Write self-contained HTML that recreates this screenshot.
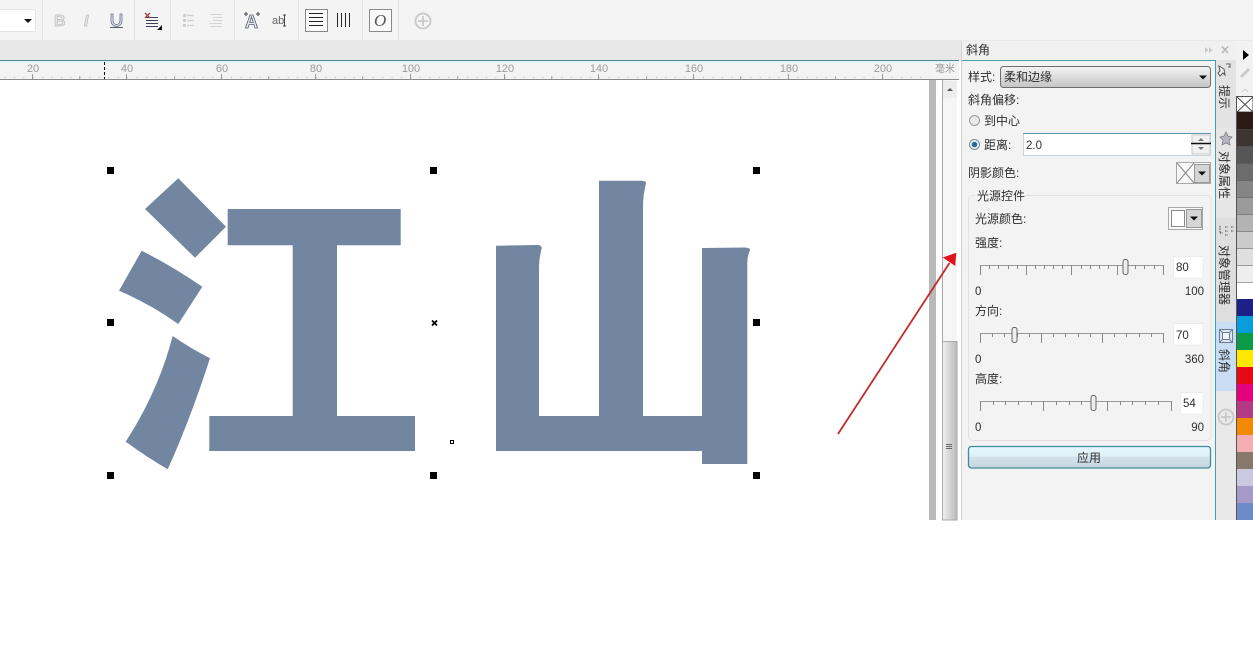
<!DOCTYPE html>
<html><head><meta charset="utf-8"><style>
html,body{margin:0;padding:0;background:#fff;width:1253px;height:671px;overflow:hidden}
svg{display:block}
text{font-family:"Liberation Sans","Noto Sans CJK SC",sans-serif;font-size:12px;fill:#2e2e2e}
.r{font-size:11px;fill:#9a9a9a}
</style></head><body>
<svg width="1253" height="671" viewBox="0 0 1253 671" xmlns="http://www.w3.org/2000/svg">
<defs>
<linearGradient id="sb" x1="0" x2="1" y1="0" y2="0"><stop offset="0" stop-color="#f2f2f2"/><stop offset="1" stop-color="#b9b9b9"/></linearGradient>
<linearGradient id="sel" x1="0" x2="0" y1="0" y2="1"><stop offset="0" stop-color="#f4f4f4"/><stop offset="1" stop-color="#c4c4c4"/></linearGradient>
<linearGradient id="btn" x1="0" x2="0" y1="0" y2="1"><stop offset="0" stop-color="#e6f8fe"/><stop offset=".45" stop-color="#dff1f8"/><stop offset=".5" stop-color="#d3e2ea"/><stop offset="1" stop-color="#c8d6de"/></linearGradient>
</defs>
<rect width="1253" height="671" fill="#fff"/>
<!-- toolbar -->
<rect width="1253" height="40" fill="#f4f4f4"/>
<rect y="40" width="1253" height="20" fill="#e8e8e8"/>
<rect x="-1" y="9.500" width="36.500" height="22" fill="#fff" stroke="#e4e4e4"/>
<path d="M24 19h8l-4 4z" fill="#111"/>
<g stroke="#e2e2e2"><path d="M42.500 0v40M134.500 0v40M170.500 0v40M234.500 0v40M298.500 0v40M362.500 0v40M398.500 0v40"/></g>
<text x="54" y="26" style="font-size:16px;font-weight:bold;fill:#e4e4e4;stroke:#bdbdbd;stroke-width:.7">B</text>
<text x="84" y="26" style="font-size:16px;font-weight:bold;font-style:italic;fill:#e4e4e4;stroke:#bdbdbd;stroke-width:.7">I</text>
<path d="M111 14v7a5 5 0 0 0 11 0v-7h-2v7a3 3 0 0 1-7 0v-7z" fill="#dfe2ec" stroke="#6c7088" stroke-width=".8"/><path d="M110 27.500h13" stroke="#555a70"/>
<path d="M146 17.500h12M146 20.500h12M146 23.500h12M146 26.500h12" stroke="#3c3f5c"/><path d="M145 13l5 5M150 13l-5 5" stroke="#b23a3a" stroke-width="1.300"/><path d="M162 25v5h-5z" fill="#111"/>
<g fill="#cdd0d0"><rect x="183" y="14" width="3" height="3"/><rect x="183" y="19" width="3" height="3"/><rect x="183" y="24" width="3" height="3"/></g>
<path d="M187 15.500h7M187 20.500h7M187 25.500h7" stroke="#d0d2d2" stroke-width="1.500"/>
<path d="M210 14.500h12M213 17.500h9M213 20.500h9M210 23.500h12M210 26.500h12" stroke="#d2d4d4"/>
<text x="245" y="28" style="font-size:18px;font-weight:bold;fill:#e8e8ee;stroke:#5a5f78;stroke-width:.8">A</text>
<path d="M244 14h4M246 12v4M256 14h4M258 12v4" stroke="#444"/>
<text x="272" y="24" style="font-size:11px;fill:#666">ab</text><path d="M284.500 15v11M283 15h3M283 26h3" stroke="#444"/>
<rect x="305.500" y="9.500" width="22" height="22" fill="#fafafa" stroke="#8a8a8a"/>
<path d="M309 13.500h14M309 17.500h14M309 21.500h14M309 25.500h14" stroke="#222"/>
<path d="M337.500 13v14M341.500 13v14M345.500 13v14M349.500 13v14" stroke="#222"/>
<rect x="369.500" y="9.500" width="22" height="22" fill="#fafafa" stroke="#8a8a8a"/>
<text x="374" y="26" style="font-size:17px;font-style:italic;font-family:'Liberation Serif',serif;fill:#555">O</text>
<circle cx="423" cy="21" r="7.500" fill="none" stroke="#c8c8c8" stroke-width="1.800"/><path d="M418 21h10M423 16v10" stroke="#c8c8c8" stroke-width="1.800"/>
<!-- ruler -->
<rect y="60" width="959" height="20" fill="#f3f3f3"/>
<rect y="60" width="959" height="1" fill="#4f8a96"/>
<rect y="61" width="959" height="2" fill="#dff5f8"/>
<rect y="79" width="959" height="1" fill="#8c8c8c"/>
<path d="M0 77.500H930" stroke="#bdbdbd" stroke-dasharray="1 8.440" stroke-dashoffset="-4.500"/>
<path d="M32.500 74v5M126.500 74v5M221.500 74v5M315.500 74v5M410.500 74v5M504.500 74v5M598.500 74v5M693.500 74v5M788.500 74v5M882.500 74v5" stroke="#9a9a9a"/>
<path d="M79.500 76v3M174.500 76v3M268.500 76v3M362.500 76v3M457.500 76v3M551.500 76v3M646.500 76v3M740.500 76v3M835.500 76v3" stroke="#b0b0b0"/>
<text class="r" x="33" y="72" text-anchor="middle">20</text><text class="r" x="127" y="72" text-anchor="middle">40</text><text class="r" x="222" y="72" text-anchor="middle">60</text><text class="r" x="316" y="72" text-anchor="middle">80</text><text class="r" x="411" y="72" text-anchor="middle">100</text><text class="r" x="505" y="72" text-anchor="middle">120</text><text class="r" x="599" y="72" text-anchor="middle">140</text><text class="r" x="694" y="72" text-anchor="middle">160</text><text class="r" x="789" y="72" text-anchor="middle">180</text><text class="r" x="883" y="72" text-anchor="middle">200</text>
<text class="r" x="935" y="72" style="font-size:10px">毫米</text>
<path d="M104.500 62v17" stroke="#111" stroke-dasharray="3 2"/>
<!-- scroll -->
<rect x="929" y="80" width="7" height="440" fill="#b9b9b9"/>
<rect x="942" y="80" width="15" height="440" fill="#f6f6f6"/>
<path d="M942.500 80v440" stroke="#a8a8a8"/>
<rect x="943" y="81" width="14" height="17" fill="#ededed"/>
<path d="M947 91l3-3 3 3z" fill="#555"/>
<rect x="942.500" y="341.500" width="14.500" height="178.500" fill="url(#sb)" stroke="#a9a9a9"/>
<path d="M946 444.500h6M946 446.500h6M946 448.500h6" stroke="#666"/>
<!-- glyphs -->
<g fill="#7286a2">
<path d="M178.300 178.300L226 226.700 195 257.700 145 209z"/>
<path d="M141.700 250.700Q172 266 202.300 286.700L178.300 324Q150 304 119 290.700z"/>
<path d="M172.700 336Q190 348 210 358.300Q190 420 167.700 469.300Q145 456 125.700 441.700Q158 392 172.700 336z"/>
<path d="M227.700 209H400.700V245.300H337V416H415V451H209.300V416H292.700V245.300H227.700z"/>
<path d="M496 245.700L536.700 245Q542 245 541.700 248.300Q539 258 539 270V416H599V180.700H641.700Q646.500 181 646 183.300Q643 195 643 206.700V416H702V248L745 247.500Q750.500 248 750 250Q747.300 256 747.300 263V464H702V451H496z"/>
</g>
<!-- handles -->
<g fill="#000">
<rect x="107" y="167" width="7" height="7"/><rect x="430" y="167" width="7" height="7"/><rect x="753" y="167" width="7" height="7"/>
<rect x="107" y="319" width="7" height="7"/><rect x="753" y="319" width="7" height="7"/>
<rect x="107" y="472" width="7" height="7"/><rect x="430" y="472" width="7" height="7"/><rect x="753" y="472" width="7" height="7"/>
</g>
<path d="M432 320.500l5 5M437 320.500l-5 5" stroke="#000" stroke-width="1.800"/>
<rect x="450.500" y="440.500" width="3" height="3" fill="#fff" stroke="#000"/>
<!-- arrow -->
<path d="M838 434L949.500 263" stroke="#c22a2e" stroke-width="1.800" fill="none"/>
<path d="M956.300 252.700L955.200 266 942.800 257.500z" fill="#e0141c"/>
<!-- panel -->
<rect x="962" y="41" width="291" height="19" fill="#f0f0f0"/>
<rect x="962" y="60" width="254" height="460" fill="#f3f3f3"/>
<path d="M961.500 41v479" stroke="#d2d2d2"/>
<path d="M962 60.500h254M1215.500 60v460" stroke="#46a0ac"/>
<text x="966" y="54">斜角</text>
<path d="M1205 47l3 3-3 3zM1209 47l3 3-3 3z" fill="#c4c4c4"/>
<path d="M1222 46.500l6 6.500M1228 46.500l-6 6.500" stroke="#b5b5b5" stroke-width="1.500"/>
<text x="968" y="81">样式:</text>
<rect x="1000.500" y="66.500" width="210" height="21" rx="3" fill="url(#sel)" stroke="#6d6d6d"/>
<text x="1004" y="81">柔和边缘</text>
<path d="M1199 75.500h8l-4 4z" fill="#111"/>
<text x="968" y="104">斜角偏移:</text>
<circle cx="974.500" cy="120.500" r="5" fill="#e9e9e9" stroke="#9a9a9a"/>
<text x="984" y="125">到中心</text>
<circle cx="974.500" cy="144.500" r="5" fill="#eef3f6" stroke="#7b8a94"/><circle cx="974.500" cy="144.500" r="2.800" fill="#2a6a94"/>
<text x="984" y="149">距离:</text>
<rect x="1023.500" y="133.500" width="187" height="22" fill="#fff" stroke="#c8d4da"/>
<path d="M1023 133.500h188" stroke="#5d97ae"/>
<text x="1026" y="149" style="font-size:11.500px">2.0</text>
<rect x="1192" y="135" width="18" height="19" fill="#f1f1f1" stroke="#c9c9c9"/>
<path d="M1198 141l3-3 3 3zM1198 147l3 3 3-3z" fill="#777"/>
<path d="M1191 143.500h20" stroke="#111" stroke-width="1.500"/>
<text x="968" y="177">阴影颜色:</text>
<rect x="1176.500" y="162.500" width="34" height="21" fill="#f8f8f8" stroke="#a8a8a8"/>
<path d="M1177 163l17 20M1194 163l-17 20" stroke="#888"/>
<rect x="1194.500" y="164.500" width="15" height="18" fill="#d5d5d5" stroke="#999"/>
<path d="M1198 171.500h8l-4 4z" fill="#111"/>
<rect x="968.500" y="195.500" width="242.500" height="245" rx="4" fill="#f3f3f3" stroke="#e2e2e2"/>
<rect x="975" y="189" width="50" height="12" fill="#f3f3f3"/>
<text x="977" y="200">光源控件</text>
<text x="975" y="223">光源颜色:</text>
<rect x="1168.500" y="207.500" width="34" height="22" fill="#f8f8f8" stroke="#a8a8a8"/>
<rect x="1171.500" y="210.500" width="13" height="16" fill="#fff" stroke="#888"/>
<rect x="1186.500" y="209.500" width="15" height="18" fill="#d5d5d5" stroke="#999"/>
<path d="M1190 216.500h8l-4 4z" fill="#111"/>
<text x="975" y="247">强度:</text>
<path d="M980 265.500H1163" stroke="#9a9a9a"/>
<path d="M980.500 265v10M1026.500 265v10M1071.500 265v10M1117.500 265v10M1163.500 265v10M989.500 265v4M998.500 265v4M1008.500 265v4M1017.500 265v4M1035.500 265v4M1044.500 265v4M1053.500 265v4M1062.500 265v4M1081.500 265v4M1090.500 265v4M1099.500 265v4M1108.500 265v4M1126.500 265v4M1135.500 265v4M1144.500 265v4M1154.500 265v4" stroke="#888"/>
<rect x="1123" y="259.500" width="5" height="15" rx="2" fill="#eee" stroke="#666"/>
<rect x="1173.500" y="256.500" width="29.500" height="21.500" fill="#fff" stroke="#ececec"/>
<text x="1176" y="271" style="font-size:11.500px">80</text>
<text x="975" y="295" style="font-size:11.500px">0</text><text x="1204" y="295" text-anchor="end" style="font-size:11.500px">100</text>
<text x="975" y="315">方向:</text>
<path d="M980 333.500H1163" stroke="#9a9a9a"/>
<path d="M980.500 333v10M1041.500 333v10M1102.500 333v10M1163.500 333v10M992.500 333v4M1004.500 333v4M1017.500 333v4M1029.500 333v4M1053.500 333v4M1065.500 333v4M1078.500 333v4M1090.500 333v4M1114.500 333v4M1126.500 333v4M1139.500 333v4M1151.500 333v4" stroke="#888"/>
<rect x="1012" y="327.500" width="5" height="15" rx="2" fill="#eee" stroke="#666"/>
<rect x="1173.500" y="323.500" width="29.500" height="21.500" fill="#fff" stroke="#ececec"/>
<text x="1176" y="339" style="font-size:11.500px">70</text>
<text x="975" y="363" style="font-size:11.500px">0</text><text x="1204" y="363" text-anchor="end" style="font-size:11.500px">360</text>
<text x="975" y="383">高度:</text>
<path d="M980 401.500H1171" stroke="#9a9a9a"/>
<path d="M980.500 401v10M1043.500 401v10M1107.500 401v10M1171.500 401v10M993.500 401v4M1005.500 401v4M1018.500 401v4M1031.500 401v4M1056.500 401v4M1069.500 401v4M1081.500 401v4M1094.500 401v4M1120.500 401v4M1132.500 401v4M1145.500 401v4M1158.500 401v4" stroke="#888"/>
<rect x="1091" y="395.500" width="5" height="15" rx="2" fill="#eee" stroke="#666"/>
<rect x="1180.500" y="392.500" width="22.500" height="21.500" fill="#fff" stroke="#ececec"/>
<text x="1183" y="407" style="font-size:11.500px">54</text>
<text x="975" y="431" style="font-size:11.500px">0</text><text x="1204" y="431" text-anchor="end" style="font-size:11.500px">90</text>
<rect x="968.500" y="446.500" width="242" height="21.500" rx="3" fill="url(#btn)" stroke="#3f8a9c" stroke-width="1.300"/>
<text x="1089" y="462" text-anchor="middle">应用</text>
<!-- tabs -->
<rect x="1216" y="60" width="20" height="460" fill="#e9e9e9"/>
<rect x="1216" y="60" width="20" height="68" fill="#e3e3e3"/>
<rect x="1216" y="128" width="20" height="90" fill="#e6e6e6"/>
<rect x="1216" y="218" width="20" height="104" fill="#dedede"/>
<rect x="1216" y="322" width="20" height="69" fill="#c9def5"/>
<path d="M1219 66l5 3 1 6-2-2-3 3-2-3 2-2zM1226 64h4v3h-2" fill="#f2f2f2" stroke="#555"/>
<text transform="translate(1220 85) rotate(90)">提示</text>
<path d="M1226 132l2 4 4 1-3 3 1 5-4-2-4 2 1-5-3-3 4-1z" fill="#b8b4c4" stroke="#666" stroke-width=".6"/>
<text transform="translate(1220 151) rotate(90)">对象属性</text>
<path d="M1220 226v7M1220 233h3M1225 227h3M1225 231h3M1225 235h3M1231 227h3M1231 231h3" stroke="#666" stroke-width="1.300" stroke-dasharray="1.500 1"/>
<text transform="translate(1220 245) rotate(90)">对象管理器</text>
<rect x="1219.500" y="329.500" width="13" height="13" fill="#dbe6f2" stroke="#6d7f93"/><rect x="1222.500" y="332.500" width="7" height="7" fill="#eef4fa" stroke="#6d7f93"/><path d="M1220 330l3 3M1232 330l-3 3M1220 342l3-3M1232 342l-3-3" stroke="#6d7f93"/>
<text transform="translate(1220 349) rotate(90)">斜角</text>
<circle cx="1226" cy="417" r="7.500" fill="none" stroke="#c8c8c8" stroke-width="1.800"/><path d="M1221 417h10M1226 412v10" stroke="#c8c8c8" stroke-width="1.800"/>
<!-- palette -->
<rect x="1236" y="41" width="17" height="55" fill="#f2f2f2"/>
<path d="M1243 50l6 5-6 5z" fill="#000"/>
<path d="M1240 76l8-8 2 2-8 8z" fill="#c8c8c8"/><path d="M1242 92l3-3 3 3" fill="none" stroke="#cfcfcf"/>
<rect x="1236.500" y="96.500" width="16.500" height="15.500" fill="#fff" stroke="#555"/>
<path d="M1237 97l16 15M1253 97l-16 15" stroke="#444"/>
<rect x="1236" y="112" width="17" height="17" fill="#2a1b16"/>
<rect x="1236" y="129" width="17" height="17" fill="#3c3532"/>
<rect x="1236" y="146" width="17" height="17" fill="#565656"/>
<rect x="1236" y="163" width="17" height="17" fill="#6c6c6c"/>
<rect x="1236" y="180" width="17" height="17" fill="#858585"/>
<rect x="1236" y="197" width="17" height="17" fill="#9b9b9b"/>
<rect x="1236" y="214" width="17" height="17" fill="#b3b3b3"/>
<rect x="1236" y="231" width="17" height="17" fill="#cbcbcb"/>
<rect x="1236" y="248" width="17" height="17" fill="#dfdfdf"/>
<rect x="1236" y="265" width="17" height="17" fill="#eeeeee"/>
<rect x="1236" y="282" width="17" height="17" fill="#ffffff"/>
<rect x="1236" y="299" width="17" height="17" fill="#1d2088"/>
<rect x="1236" y="316" width="17" height="17" fill="#0a9ddc"/>
<rect x="1236" y="333" width="17" height="17" fill="#0a9a48"/>
<rect x="1236" y="350" width="17" height="17" fill="#ffe800"/>
<rect x="1236" y="367" width="17" height="17" fill="#e60a14"/>
<rect x="1236" y="384" width="17" height="17" fill="#e5007f"/>
<rect x="1236" y="401" width="17" height="17" fill="#b33a85"/>
<rect x="1236" y="418" width="17" height="17" fill="#f18a00"/>
<rect x="1236" y="435" width="17" height="17" fill="#f2aeb0"/>
<rect x="1236" y="452" width="17" height="17" fill="#86786a"/>
<rect x="1236" y="469" width="17" height="17" fill="#cbc8e2"/>
<rect x="1236" y="486" width="17" height="17" fill="#a59ac8"/>
<rect x="1236" y="503" width="17" height="17" fill="#6c8bc8"/>
<path d="M1236.500 96v424" stroke="#555"/>
<path d="M1236 129.500h17M1236 146.500h17M1236 163.500h17M1236 180.500h17M1236 197.500h17M1236 214.500h17M1236 231.500h17M1236 248.500h17M1236 265.500h17M1236 282.500h17" stroke="#4a4a4a" stroke-width=".6"/>
</svg>
</body></html>
